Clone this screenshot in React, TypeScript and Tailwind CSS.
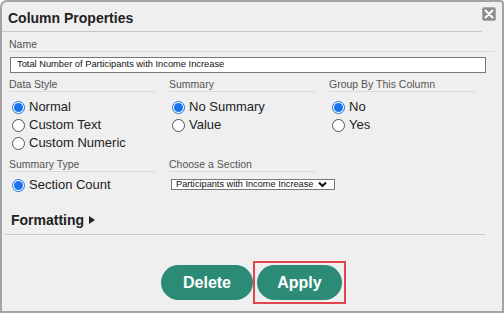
import React from "react";

const Radio = ({ checked, label }: { checked?: boolean; label: string }) => (
  <div className="flex h-[18px] items-center">
    {checked ? (
      <span className="ml-[3px] flex h-[13px] w-[13px] items-center justify-center rounded-full border border-[#1a73e8] bg-white">
        <span className="h-[9px] w-[9px] rounded-full bg-[#1a73e8]" />
      </span>
    ) : (
      <span className="ml-[3px] h-[13px] w-[13px] rounded-full border border-[#555] bg-white" />
    )}
    <span className="ml-[4px] text-[13px] text-[#222]">{label}</span>
  </div>
);

const Label = ({ text }: { text: string }) => (
  <div className="h-[14px] border-b border-[#d9d9d9] text-[10.5px] leading-[13px] text-[#555]">
    {text}
  </div>
);

export default function App() {
  return (
    <div
      className="relative h-[313px] w-[504px] rounded-tl-[7px] rounded-tr-[4px] border-2 border-[#a3a3a3] bg-[#efefef]"
      style={{ fontFamily: '"Liberation Sans", Arial, sans-serif' }}
    >
      <div className="mr-[20px] flex h-[30px] items-center border-b border-[#c8c8c8] pl-[6px] pt-[3px]">
        <span className="text-[14px] font-bold text-[#222]">Column Properties</span>
      </div>
      <div className="absolute right-[6px] top-[5px] flex h-[14px] w-[14px] items-center justify-center rounded-[2px] border border-[#aaa] bg-[#8c8c8c]">
        <svg width="10" height="10" viewBox="0 0 10 10">
          <path d="M1.5 1.5 L8.5 8.5 M8.5 1.5 L1.5 8.5" stroke="#fff" strokeWidth="2" strokeLinecap="round" />
        </svg>
      </div>

      <div className="px-[7px] pt-[6px]">
        <Label text="Name" />
        <div className="mt-[5px] ml-[1px] mr-[9px] flex h-[16px] items-center border border-[#777] bg-white pl-[6px] text-[9.3px] text-[#111]">
          Total Number of Participants with Income Increase
        </div>

        <div className="mt-[5px] grid grid-cols-[146px_146px_146px] gap-x-[14px]">
          <div>
            <Label text="Data Style" />
            <div className="mt-[6px]">
              <Radio checked label="Normal" />
              <Radio label="Custom Text" />
              <Radio label="Custom Numeric" />
            </div>
          </div>
          <div>
            <Label text="Summary" />
            <div className="mt-[6px]">
              <Radio checked label="No Summary" />
              <Radio label="Value" />
            </div>
          </div>
          <div>
            <Label text="Group By This Column" />
            <div className="mt-[6px]">
              <Radio checked label="No" />
              <Radio label="Yes" />
            </div>
          </div>
        </div>

        <div className="mt-[6px] grid grid-cols-[146px_146px] gap-x-[14px]">
          <div>
            <Label text="Summary Type" />
            <div className="mt-[4px]">
              <Radio checked label="Section Count" />
            </div>
          </div>
          <div>
            <Label text="Choose a Section" />
            <div className="mt-[7px] ml-[2px] flex h-[11px] w-[164px] items-center border border-[#777] bg-white pl-[4px] text-[9.2px] leading-none text-[#111]">
              <span>Participants with Income Increase</span>
              <svg className="ml-[5px]" width="9" height="7" viewBox="0 0 9 7">
                <path d="M1 1.5 L4.5 5 L8 1.5" stroke="#111" strokeWidth="2" fill="none" />
              </svg>
            </div>
          </div>
        </div>
      </div>

      <div className="mx-[3px] mr-[17px] mt-[12px] flex h-[29px] items-center border-b border-[#c8c8c8] pl-[6px]">
        <span className="text-[14px] font-bold text-[#222]">Formatting</span>
        <svg className="ml-[5px]" width="6" height="8" viewBox="0 0 6 8">
          <path d="M0 0 L6 4 L0 8 Z" fill="#222" />
        </svg>
      </div>

      <div className="mt-[26px] flex justify-center pl-[3px]">
        <button className="mt-[4px] h-[35px] w-[92px] rounded-full bg-[#2c8b77] text-[16px] font-bold text-white">
          Delete
        </button>
        <div className="border-2 border-[#e0474c] p-[2px]">
          <button className="h-[35px] w-[85px] rounded-full bg-[#2c8b77] text-[16px] font-bold text-white">
            Apply
          </button>
        </div>
      </div>
    </div>
  );
}
